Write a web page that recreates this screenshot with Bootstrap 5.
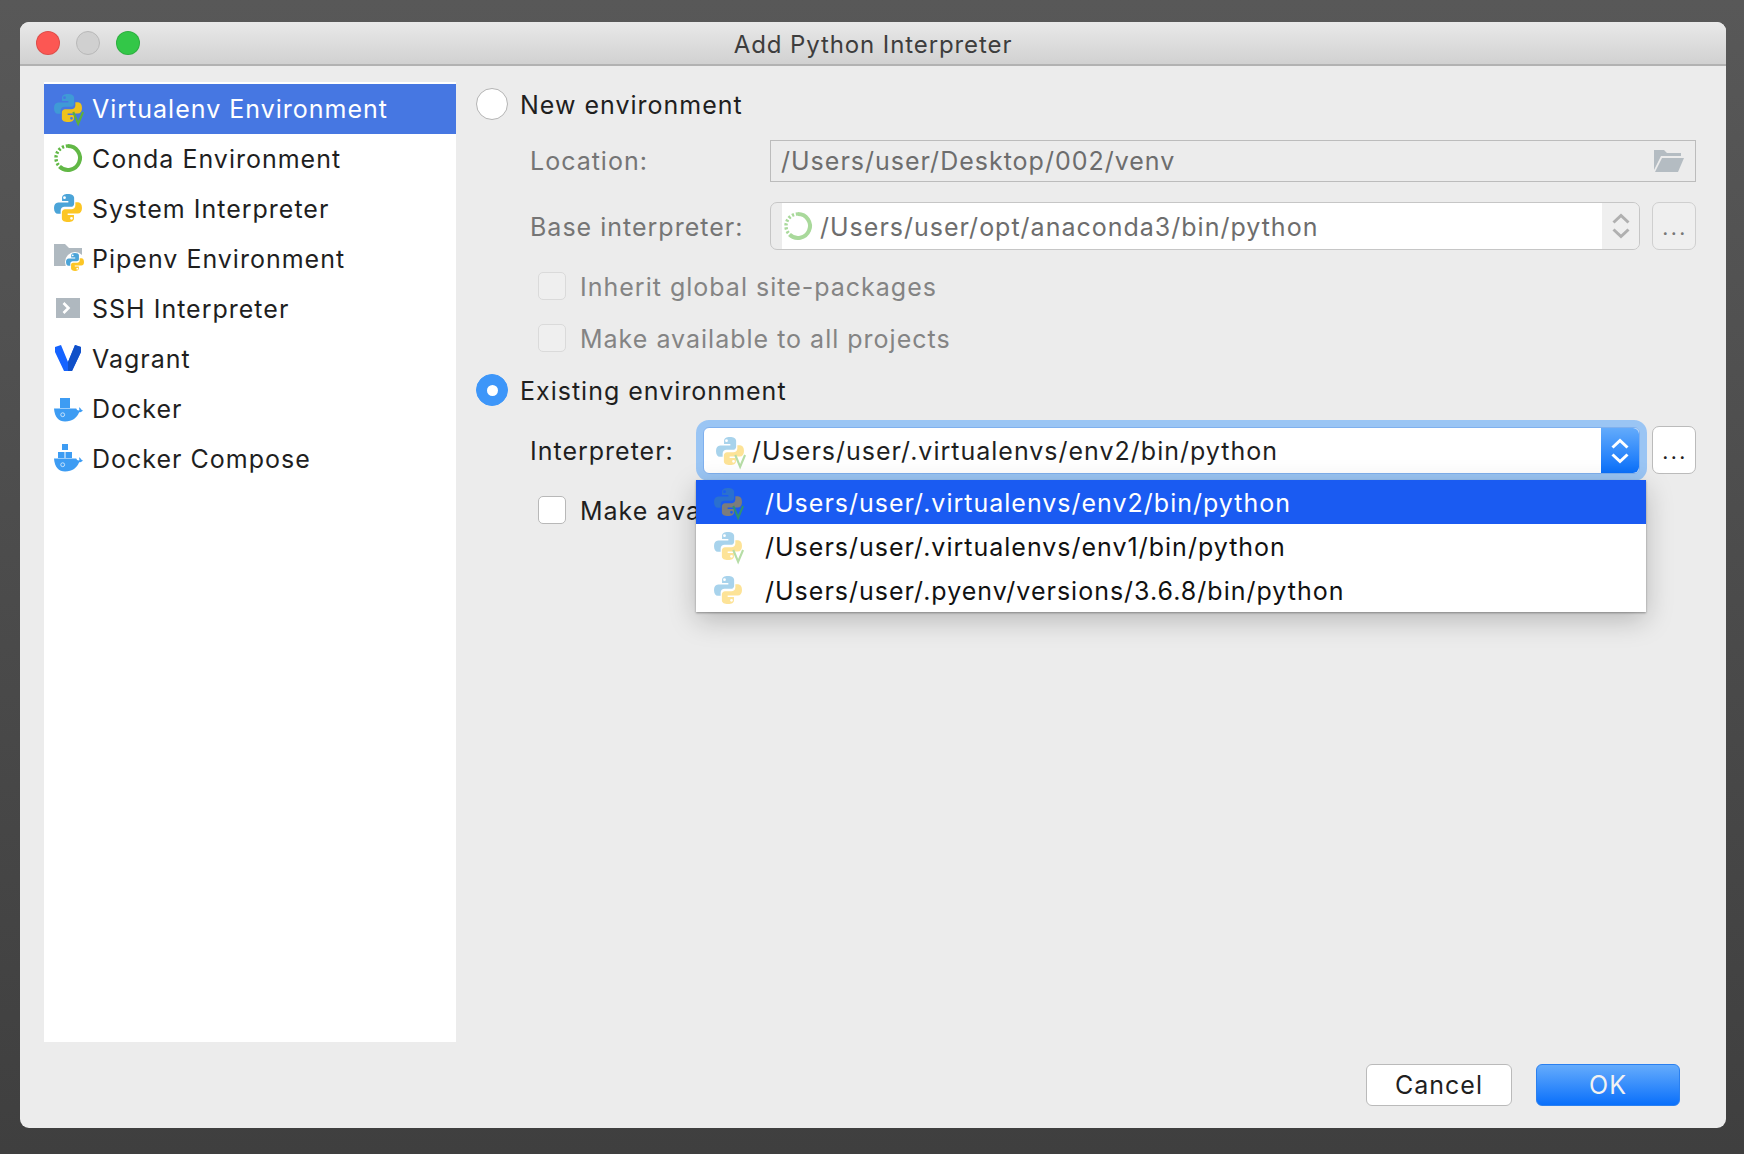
<!DOCTYPE html>
<html lang="en">
<head>
<meta charset="UTF-8">
<title>Add Python Interpreter</title>
<link href="https://cdn.jsdelivr.net/npm/bootstrap@5.3.3/dist/css/bootstrap.min.css" rel="stylesheet">
<style>
html, body { height: 100%; }
body { background: linear-gradient(#585858, #3f3f3f); padding: 22px 18px 26px 20px; font-family: Inter, "Liberation Sans", sans-serif; font-size: 25px; letter-spacing: 1px; color: #1f1f1f; }
svg, symbol { overflow: visible; }
.ico { width: 28px; height: 28px; flex: none; display: block; }
.tx { padding-top: 2px; }
.tx-lo { padding-top: 4px; }

.win { height: 100%; background: #ececec; border-radius: 9px; overflow: hidden; }
.titlebar { height: 44px; flex: none; background: linear-gradient(#e9e9e9, #d1d1d1); border-bottom: 2px solid #b2b2b2; padding: 0 16px; }
.lights { width: 104px; gap: 16px; flex: none; }
.tl { width: 24px; height: 24px; border-radius: 50%; border: 1px solid rgba(0,0,0,.12); }
.tl-red { background: #fc5753; }
.tl-gray { background: #d0d0d0; border-color: #b8b8b8; }
.tl-green { background: #33c748; }
.wintitle { flex: 1; text-align: center; font-size: 24px; color: #3d3d3d; padding-top: 4px; letter-spacing: .9px; }
.light-spacer { width: 104px; flex: none; }

.body-area { padding: 16px 30px 0 24px; min-height: 0; }
.sidebar { width: 412px; flex: none; background: #fff; padding-top: 2px; }
.side-row { height: 50px; padding: 0 10px; gap: 10px; border: 0; color: #1f1f1f; background: transparent; }
.side-row .ico { margin-bottom: 2px; }
.side-row.active { background: #4677e2; color: #fff; }

.panel { padding: 6px 0 0 20px; min-width: 0; }
.radio-dot { width: 32px; height: 32px; border-radius: 50%; background: #fff; border: 1px solid #b4b4b4; flex: none; }
.radio-dot.on { background: #3d96f9; border-color: #3d96f9; position: relative; }
.radio-dot.on::after { content: ""; position: absolute; left: 10px; top: 10px; width: 11px; height: 11px; border-radius: 50%; background: #fff; }
.radio-row { height: 32px; gap: 12px; }
.field-row { padding-left: 54px; }
.field-label { width: 240px; flex: none; }
.lbl-off { color: #757575; }
.loc-input { height: 42px; flex: 1; border: 1.5px solid #bcbcbc; padding: 0 11px 0 10px; color: #6d6d6d; }
.combo { flex: 1; height: 48px; border: 1.5px solid #c6c6c6; border-radius: 7px; padding-left: 11px; min-width: 0; background: #ececec; }
.combo-main { background: #fff; height: 100%; flex: 1; gap: 8px; color: #6d6d6d; padding-left: 2px; }
.combo-arrow { width: 37px; flex: none; height: 100%; background: #efefef; border-radius: 0 6px 6px 0; }
.dots-btn { width: 44px; height: 48px; flex: none; margin-left: 12px; border: 1.5px solid #cfcfcf; border-radius: 7px; background: #efefef; color: #777; font-size: 21px; line-height: 1; letter-spacing: 2.5px; padding: 14px 0 0 2px; text-align: center; }
.dots-btn.on { background: #fff; border-color: #bbb; color: #222; }
.check-row { height: 28px; padding-left: 62px; gap: 14px; }
.check-box { width: 28px; height: 28px; border-radius: 5px; border: 1.5px solid #b8b8b8; background: #fff; flex: none; }
.check-box.off { background: #efefef; border-color: #dadada; }
.lbl-muted { color: #848484; }

.combo-wrap { flex: 1; position: relative; min-width: 0; padding-top: 1px; }
.combo-live { height: 47px; border-radius: 6px; background: #fff; box-shadow: 0 0 0 7px #9ac5f4; border: 1px solid #7fb0ee; padding-left: 12px; gap: 8px; }
.combo-arrow-live { width: 38px; flex: none; height: 100%; margin-left: auto; background: linear-gradient(#63abfb, #0a70fb); border-radius: 0 6px 6px 0; }

.popup { position: absolute; left: -7px; right: -6px; top: 54px; padding: 0; margin: 0; display: block; border: 0; border-radius: 0; box-shadow: 0 1px 2px rgba(0,0,0,.35), 0 8px 26px rgba(0,0,0,.22); z-index: 5; font-size: 25px; }
.popup-row { height: 44px; padding: 0 0 0 18px; gap: 23px; color: #111; }
.popup-row.active { background: #1a5bf2; color: #fff; }

.foot { padding: 22px 46px 22px 0; gap: 24px; flex: none; }
.foot-btn { height: 42px; width: 146px; padding: 0; font-size: 25px; border-radius: 6px; letter-spacing: 1px; line-height: 1; }
.btn-cancel { background: #fff; border: 1px solid #bababa; color: #1f1f1f; }
.btn-ok { width: 144px; background: linear-gradient(#65acfc, #0a70fb); border: 1px solid #2a80f0; color: #f2f2f2; }

.py-full { --a: #4ba4d8; --b: #fcc625; --v: #62b543; }
.py-side { --a: #3f9ad6; --b: #eec21c; --v: #5cb03d; }
.py-faint { --a: #a8d3ec; --b: #fde397; --v: #b6dda6; }
.py-sel { --a: #2a70cf; --b: #7c7c7c; --v: #2f9072; }
.conda-full { color: #62b846; }
.conda-faint { color: #a9d99b; }
.chev-off { color: #b0b0b0; }
</style>
</head>
<body>

<svg width="0" height="0" class="position-absolute">
  <symbol id="snake" viewBox="0 0 16 16">
    <path fill-rule="evenodd" d="M7.9 0C5.9 0 4.6.7 4.6 2.2V4h3.6v.8H2.4C.9 4.800 0 6 0 8c0 2.100.9 3.300 2.200 3.300H3.800V9.500C3.800 8.200 4.800 7.300 6 7.300h3.700c1 0 1.800-.8 1.800-1.800V2.200C11.500.7 10 0 7.900 0ZM6 1.300a.8.800 0 1 1 0 1.600.8.800 0 0 1 0-1.600Z"/>
  </symbol>
  <symbol id="python" viewBox="0 0 16 16">
    <use href="#snake" width="16" height="16" fill="var(--a)"/>
    <use href="#snake" width="16" height="16" fill="var(--b)" transform="rotate(180 8 8)"/>
  </symbol>
  <symbol id="venv" viewBox="0 0 16 16">
    <use href="#python" width="16" height="16"/>
    <path d="M11 10.300l2.800 6.700 2.800-6.700" fill="none" stroke="var(--v)" stroke-width="1.200"/>
  </symbol>
  <symbol id="conda" viewBox="0 0 28 28">
    <path d="M14 2A12 12 0 1 1 5.500 22.500" fill="none" stroke="currentColor" stroke-width="4"/>
    <path d="M14 2A12 12 0 0 0 5.500 22.500" fill="none" stroke="currentColor" stroke-width="3.400" stroke-dasharray="2.200 1.800"/>
  </symbol>
  <symbol id="whale" viewBox="0 0 30 16">
    <path d="M0 2h23c.6 1.700 1.900 2.400 3.300 1.900l-.4-3.100c1.200.5 1.900 1.400 2.100 2.400l1.800.6c-.8 1.500-2 2.200-3.800 2.200C23.800 11.800 19 15.500 11.500 15.500 5 15.500 .6 11 0 2Z" fill="#3d9cf3"/>
    <circle cx="9" cy="8.500" r="2" fill="none" stroke="#fff" stroke-width=".7"/>
  </symbol>
  <symbol id="chev" viewBox="0 0 18 26">
    <path d="M1.500 9.500 9 2.500l7.500 7M1.500 16.500 9 23.500l7.500-7" fill="none" stroke="currentColor" stroke-width="3"/>
  </symbol>
</svg>

<div class="win d-flex flex-column">
  <div class="titlebar d-flex align-items-center">
    <div class="lights d-flex">
      <span class="tl tl-red"></span>
      <span class="tl tl-gray"></span>
      <span class="tl tl-green"></span>
    </div>
    <div class="wintitle">Add Python Interpreter</div>
    <div class="light-spacer"></div>
  </div>

  <div class="body-area d-flex flex-grow-1">
    <div class="sidebar list-group list-group-flush rounded-0">
      <div class="list-group-item side-row active d-flex align-items-center">
        <svg class="ico py-side"><use href="#venv" width="28" height="28"/></svg><span class="tx">Virtualenv Environment</span>
      </div>
      <div class="list-group-item side-row d-flex align-items-center">
        <svg class="ico conda-full"><use href="#conda" width="28" height="28"/></svg><span class="tx">Conda Environment</span>
      </div>
      <div class="list-group-item side-row d-flex align-items-center">
        <svg class="ico py-full"><use href="#python" width="28" height="28"/></svg><span class="tx">System Interpreter</span>
      </div>
      <div class="list-group-item side-row d-flex align-items-center">
        <svg class="ico py-full" viewBox="0 0 28 28">
          <path d="M0 0h11l4 4h13v18H0Z" fill="#afb9c0"/>
          <circle cx="21" cy="18" r="10" fill="#fff"/>
          <use href="#python" x="12" y="9" width="18" height="18"/>
        </svg><span class="tx">Pipenv Environment</span>
      </div>
      <div class="list-group-item side-row d-flex align-items-center">
        <svg class="ico" viewBox="0 0 28 28">
          <rect x="2" y="4" width="24" height="20" fill="#afb8bf"/>
          <path d="M9.500 9l5 5-5 5" fill="none" stroke="#fff" stroke-width="2.600"/>
        </svg><span class="tx">SSH Interpreter</span>
      </div>
      <div class="list-group-item side-row d-flex align-items-center">
        <svg class="ico" viewBox="0 0 28 28">
          <path d="M1 3l6-2 7 17 7-17 6 2v5l-9 19h-8L1 8Z" fill="#1563ff"/>
          <path d="M21 1l6 2v5l-9 19h-4v-9Z" fill="#1050c8"/>
        </svg><span class="tx">Vagrant</span>
      </div>
      <div class="list-group-item side-row d-flex align-items-center">
        <svg class="ico" viewBox="0 0 28 28">
          <rect x="6" y="4" width="10" height="10" fill="#3d9cf3"/>
          <use href="#whale" x="0" y="12.500" width="29" height="15.500"/>
        </svg><span class="tx">Docker</span>
      </div>
      <div class="list-group-item side-row d-flex align-items-center">
        <svg class="ico" viewBox="0 0 28 28">
          <rect x="8" y="0" width="6" height="6" fill="#3d9cf3"/>
          <rect x="4" y="8" width="6.500" height="6" fill="#3d9cf3"/>
          <rect x="11.500" y="8" width="6.500" height="6" fill="#3d9cf3"/>
          <use href="#whale" x="0" y="12.500" width="29" height="15.500"/>
        </svg><span class="tx">Docker Compose</span>
      </div>
    </div>

    <div class="panel flex-grow-1 d-flex flex-column">
      <div class="radio-row d-flex align-items-center">
        <span class="radio-dot"></span><span class="tx-lo">New environment</span>
      </div>

      <div class="field-row d-flex align-items-center" style="margin-top:20px">
        <span class="field-label lbl-off tx">Location:</span>
        <div class="loc-input d-flex align-items-center justify-content-between">
          <span class="tx">/Users/user/Desktop/002/venv</span>
          <svg width="30" height="22" viewBox="0 0 30 22">
            <path d="M0 0h10l3 3h14v3H7L0 20Z" fill="#b4bcc2"/>
            <path d="M8 8h22l-6 14H1Z" fill="#b4bcc2"/>
          </svg>
        </div>
      </div>

      <div class="field-row d-flex align-items-center" style="margin-top:20px">
        <span class="field-label lbl-off tx-lo">Base interpreter:</span>
        <div class="combo d-flex align-items-center">
          <div class="combo-main d-flex align-items-center">
            <svg class="ico conda-faint"><use href="#conda" width="28" height="28"/></svg><span class="tx-lo">/Users/user/opt/anaconda3/bin/python</span>
          </div>
          <div class="combo-arrow d-flex align-items-center justify-content-center chev-off">
            <svg width="18" height="26"><use href="#chev" width="18" height="26"/></svg>
          </div>
        </div>
        <div class="dots-btn">...</div>
      </div>

      <div class="check-row d-flex align-items-center lbl-muted" style="margin-top:22px">
        <span class="check-box off"></span><span class="tx-lo">Inherit global site-packages</span>
      </div>
      <div class="check-row d-flex align-items-center lbl-muted" style="margin-top:24px">
        <span class="check-box off"></span><span class="tx-lo">Make available to all projects</span>
      </div>

      <div class="radio-row d-flex align-items-center" style="margin-top:22px">
        <span class="radio-dot on"></span><span class="tx-lo">Existing environment</span>
      </div>

      <div class="field-row d-flex align-items-center" style="margin-top:20px">
        <span class="field-label tx-lo" style="width:173px">Interpreter:</span>
        <div class="combo-wrap">
          <div class="combo-live d-flex align-items-center">
            <svg class="ico py-faint"><use href="#venv" width="28" height="28"/></svg>
            <span class="tx">/Users/user/.virtualenvs/env2/bin/python</span>
            <div class="combo-arrow-live d-flex align-items-center justify-content-center text-white">
              <svg width="18" height="26"><use href="#chev" width="18" height="26"/></svg>
            </div>
          </div>
          <div class="dropdown-menu show popup">
            <div class="dropdown-item popup-row active d-flex align-items-center">
              <svg class="ico py-sel"><use href="#venv" width="28" height="28"/></svg><span class="tx-lo">/Users/user/.virtualenvs/env2/bin/python</span>
            </div>
            <div class="dropdown-item popup-row d-flex align-items-center">
              <svg class="ico py-faint"><use href="#venv" width="28" height="28"/></svg><span class="tx-lo">/Users/user/.virtualenvs/env1/bin/python</span>
            </div>
            <div class="dropdown-item popup-row d-flex align-items-center">
              <svg class="ico py-faint"><use href="#python" width="28" height="28"/></svg><span class="tx-lo">/Users/user/.pyenv/versions/3.6.8/bin/python</span>
            </div>
          </div>
        </div>
        <div class="dots-btn on">...</div>
      </div>

      <div class="check-row d-flex align-items-center" style="margin-top:22px">
        <span class="check-box"></span><span class="tx-lo">Make ava</span>
      </div>
    </div>
  </div>

  <div class="foot d-flex justify-content-end">
    <button type="button" class="btn foot-btn btn-cancel">Cancel</button>
    <button type="button" class="btn foot-btn btn-ok">OK</button>
  </div>
</div>

<script src="https://cdn.jsdelivr.net/npm/bootstrap@5.3.3/dist/js/bootstrap.bundle.min.js"></script>
</body>
</html>
